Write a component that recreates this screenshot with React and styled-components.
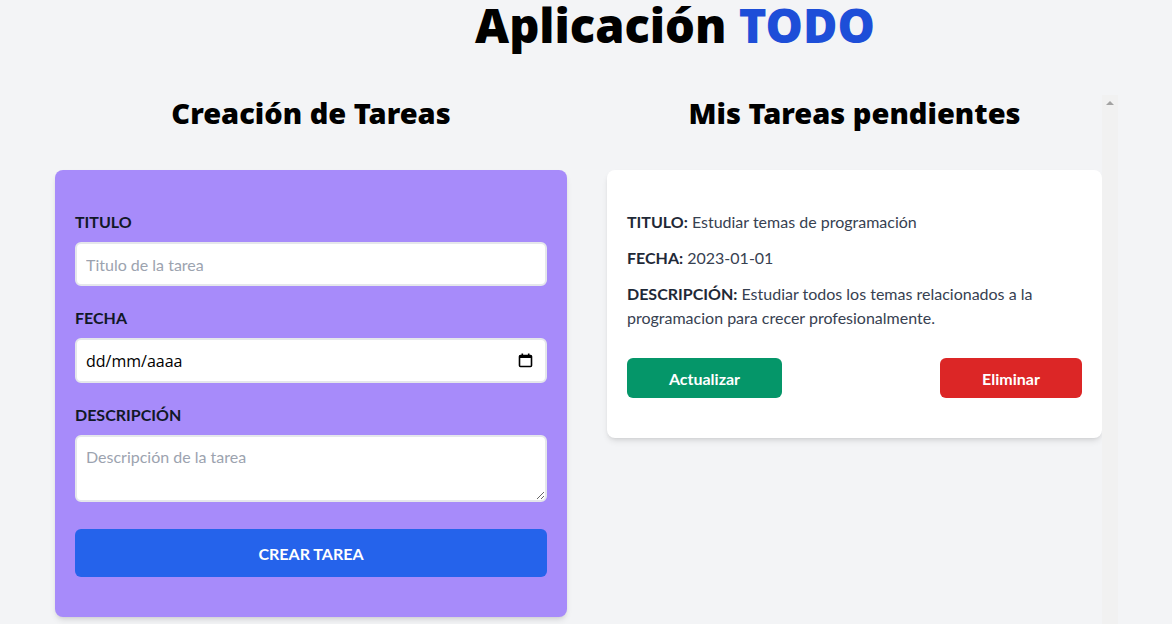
import React from "react";
import styled, { createGlobalStyle } from "styled-components";

const GlobalStyle = createGlobalStyle`
    * {
        box-sizing: border-box;
    }
    body {
        margin: 0;
        background-color: #f3f4f6;
        font-family: Lato, "Open Sans", sans-serif;
        color: #111827;
        overflow: hidden;
    }
`;

const Page = styled.div`
    display: flex;
    flex-direction: column;
    height: 624px;
    overflow: hidden;
`;

const AppTitle = styled.h1`
    margin: 0 0 45px;
    padding-left: 178px;
    font-family: "Noto Sans", Lato, sans-serif;
    font-size: 47px;
    line-height: 50px;
    font-weight: 900;
    text-align: center;
    color: #000;
`;

const Accent = styled.span`
    color: #1d4ed8;
`;

const Columns = styled.div`
    display: grid;
    grid-template-columns: 512px 511px;
    column-gap: 40px;
    align-items: start;
    padding: 0 55px;
`;

const Column = styled.section`
    display: flex;
    flex-direction: column;
`;

const ScrollArea = styled.section`
    display: flex;
    height: 540px;
`;

const ScrollContent = styled.div`
    flex: 1;
    display: flex;
    flex-direction: column;
    min-width: 0;
`;

const ScrollRail = styled.div`
    display: flex;
    justify-content: center;
    width: 16px;
    padding-top: 6px;
    background-color: #f1f1f1;
`;

const RailArrow = styled.span`
    width: 0;
    height: 0;
    border-left: 4px solid transparent;
    border-right: 4px solid transparent;
    border-bottom: 4px solid #a3a3a3;
`;

const SectionTitle = styled.h2`
    margin: 0 0 39px;
    font-family: "Noto Sans", Lato, sans-serif;
    font-size: 29px;
    line-height: 36px;
    font-weight: 900;
    text-align: center;
    color: #000;
`;

const FormCard = styled.form`
    display: flex;
    flex-direction: column;
    padding: 40px 20px;
    border-radius: 8px;
    background-color: #a78bfa;
    box-shadow: 0 4px 6px -1px rgba(0, 0, 0, 0.1), 0 2px 4px -2px rgba(0, 0, 0, 0.1);
`;

const Label = styled.label`
    display: block;
    margin-bottom: 8px;
    font-size: 16px;
    line-height: 24px;
    font-weight: 700;
    color: #111827;
`;

const Field = styled.div`
    display: flex;
    flex-direction: column;
    margin-bottom: ${({ $last }) => ($last ? "27px" : "20px")};
`;

const TextInput = styled.input`
    width: 100%;
    height: 44px;
    padding: 0 9px;
    border: 2px solid #e5e7eb;
    border-radius: 6px;
    background: #fff;
    font-family: Lato, "Open Sans", sans-serif;
    font-size: 16px;
    color: #111827;
    outline: none;

    &::placeholder {
        color: #9ca3af;
    }
`;

const DateBox = styled.div`
    display: flex;
    align-items: center;
    height: 45px;
    padding: 0 12px 0 9px;
    border: 2px solid #e5e7eb;
    border-radius: 6px;
    background: #fff;
`;

const DateInput = styled.input`
    flex: 1;
    min-width: 0;
    border: none;
    padding: 0;
    background: transparent;
    font-family: "Open Sans", Lato, sans-serif;
    font-size: 16px;
    color: #000;
    outline: none;

    &::placeholder {
        color: #000;
    }
`;

const CalendarIcon = () => (
    <svg width="15" height="15" viewBox="0 0 15 15" fill="none">
        <rect x="1.5" y="2.5" width="12" height="11" rx="1" stroke="#000" strokeWidth="1.6" />
        <rect x="1.5" y="2.5" width="12" height="2.5" fill="#000" />
        <rect x="3.5" y="0.5" width="1.6" height="3" fill="#000" />
        <rect x="9.9" y="0.5" width="1.6" height="3" fill="#000" />
    </svg>
);

const TextArea = styled.textarea`
    width: 100%;
    height: 67px;
    padding: 8px 9px;
    border: 2px solid #e5e7eb;
    border-radius: 6px;
    background: #fff;
    font-family: Lato, "Open Sans", sans-serif;
    font-size: 16px;
    line-height: 24px;
    color: #111827;
    outline: none;

    &::placeholder {
        color: #9ca3af;
    }
`;

const SubmitButton = styled.button`
    height: 48px;
    border: none;
    border-radius: 6px;
    background-color: #2563eb;
    color: #fff;
    font-family: Lato, "Open Sans", sans-serif;
    font-size: 16px;
    font-weight: 700;
`;

const TaskCard = styled.article`
    display: flex;
    flex-direction: column;
    padding: 40px 20px;
    border-radius: 8px;
    background-color: #fff;
    box-shadow: 0 4px 6px -1px rgba(0, 0, 0, 0.1), 0 2px 4px -2px rgba(0, 0, 0, 0.1);
`;

const TaskLine = styled.p`
    margin: 0 0 12px;
    font-size: 16px;
    line-height: 24px;
    color: #374151;

    &:last-of-type {
        margin-bottom: 28px;
    }
`;

const Strong = styled.strong`
    font-weight: 700;
    color: #1f2937;
`;

const Actions = styled.div`
    display: flex;
    justify-content: space-between;
`;

const ActionButton = styled.button`
    width: ${({ $w }) => $w}px;
    height: 40px;
    border: none;
    border-radius: 6px;
    background-color: ${({ $bg }) => $bg};
    color: #fff;
    font-family: Lato, "Open Sans", sans-serif;
    font-size: 16px;
    font-weight: 700;
`;

const App = () => {
    return (
        <Page>
            <GlobalStyle />
            <AppTitle>
                Aplicación <Accent>TODO</Accent>
            </AppTitle>
            <Columns>
                <Column>
                    <SectionTitle>Creación de Tareas</SectionTitle>
                    <FormCard onSubmit={(e) => e.preventDefault()}>
                        <Field>
                            <Label htmlFor="titulo">TITULO</Label>
                            <TextInput id="titulo" placeholder="Titulo de la tarea" />
                        </Field>
                        <Field>
                            <Label htmlFor="fecha">FECHA</Label>
                            <DateBox>
                                <DateInput id="fecha" placeholder="dd/mm/aaaa" />
                                <CalendarIcon />
                            </DateBox>
                        </Field>
                        <Field $last>
                            <Label htmlFor="descripcion">DESCRIPCIÓN</Label>
                            <TextArea id="descripcion" placeholder="Descripción de la tarea" />
                        </Field>
                        <SubmitButton type="submit">CREAR TAREA</SubmitButton>
                    </FormCard>
                </Column>
                <ScrollArea>
                    <ScrollContent>
                        <SectionTitle>Mis Tareas pendientes</SectionTitle>
                        <TaskCard>
                            <TaskLine>
                                <Strong>TITULO:</Strong> Estudiar temas de programación
                            </TaskLine>
                            <TaskLine>
                                <Strong>FECHA:</Strong> 2023-01-01
                            </TaskLine>
                            <TaskLine>
                                <Strong>DESCRIPCIÓN:</Strong> Estudiar todos los temas relacionados a la
                                programacion para crecer profesionalmente.
                            </TaskLine>
                            <Actions>
                                <ActionButton $w={155} $bg="#059669">Actualizar</ActionButton>
                                <ActionButton $w={142} $bg="#dc2626">Eliminar</ActionButton>
                            </Actions>
                        </TaskCard>
                    </ScrollContent>
                    <ScrollRail>
                        <RailArrow />
                    </ScrollRail>
                </ScrollArea>
            </Columns>
        </Page>
    );
};

export default App;
